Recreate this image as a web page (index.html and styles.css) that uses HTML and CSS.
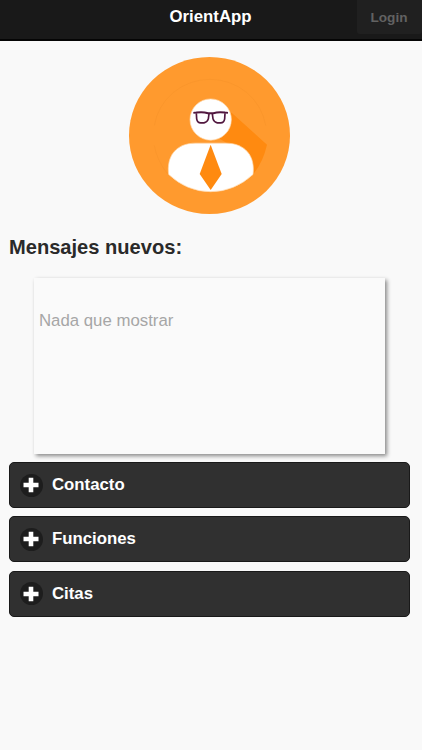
FILE: index.html
```html
<!DOCTYPE html>
<html lang="es">
<head>
  <meta charset="UTF-8">
  <meta name="viewport" content="width=device-width, initial-scale=1.0">
  <title>OrientApp</title>
  <link rel="stylesheet" href="styles.css">
</head>
<body>
  <header class="header">
    <h1>OrientApp</h1>
    <button class="login-btn" disabled>Login</button>
  </header>

  <div class="content">
    <svg class="logo" viewBox="28 36 483 472" preserveAspectRatio="none">
      <ellipse cx="269.5" cy="272" rx="241.5" ry="236" fill="#ff9a2e"/>
      <path d="M104 242 A169 164 0 0 1 438 242 M104 302 Q111 345 143 387" fill="none" stroke="#f8942a" stroke-width="2"/>
      <path d="M335 203 L442 300 Q430 353 401 388 L330 300 L300 282 Z" fill="#ff8a10"/>
      <circle cx="273" cy="224" r="62" fill="#fff" stroke="#ffd9ae" stroke-width="2"/>
      <path d="M147 389 C140 335 168 295 228 295 L318 295 C378 295 407 335 400 389 Q344 441 273 441 Q202 441 147 389 Z" fill="#fff" stroke="#ffd9ae" stroke-width="2"/>
      <path d="M273 300 L306 388 L273 436 L240 388 Z" fill="#ff8a10"/>
      <path d="M221 204 L230 203 Q250 200 265 205 L281 205 Q296 200 316 203 L325 204" fill="none" stroke="#51173f" stroke-width="6"/>
      <path d="M230 205 L231 222 Q233 234 243 234 L253 234 Q263 232 266 222 L268 207 M316 205 L315 222 Q313 234 303 234 L293 234 Q283 232 280 222 L278 207" fill="none" stroke="#51173f" stroke-width="5"/>
    </svg>

    <h2>Mensajes nuevos:</h2>
    <div class="messages">
      <p>Nada que mostrar</p>
    </div>

    <div class="collapsible">
      <span class="icon-plus"><svg viewBox="0 0 16 16"><path d="M8 .8v14.4M.5 8h15" stroke="#fff" stroke-width="4.6"/></svg></span>
      Contacto
    </div>
    <div class="collapsible">
      <span class="icon-plus"><svg viewBox="0 0 16 16"><path d="M8 .8v14.4M.5 8h15" stroke="#fff" stroke-width="4.6"/></svg></span>
      Funciones
    </div>
    <div class="collapsible">
      <span class="icon-plus"><svg viewBox="0 0 16 16"><path d="M8 .8v14.4M.5 8h15" stroke="#fff" stroke-width="4.6"/></svg></span>
      Citas
    </div>
  </div>
</body>
</html>
```
FILE: styles.css
```css
body {
  margin: 0;
  min-height: 100vh;
  background-color: #f9f9f9;
  color: #2a2a2a;
  font-family: "Liberation Sans", Helvetica, Arial, sans-serif;
}
.header {
  display: grid;
  grid-template-columns: 64px 1fr 65px;
  height: 41px;
  box-sizing: border-box;
  background-color: #191919;
  border-bottom: 2px solid #050505;
  color: #fff;
}
.header h1 {
  grid-column: 2;
  margin: 0;
  font-size: 16.8px;
  line-height: 34px;
  text-align: center;
}
.login-btn {
  height: 34px;
  margin: 0;
  padding: 0 1px 0 0;
  background-color: #202020;
  border: none;
  border-radius: 0 0 3px 3px;
  color: #626262;
  font: bold 13.6px "Liberation Sans", Arial, sans-serif;
}
.content {
  padding: 16px 12px 0 9px;
}
.logo {
  display: block;
  width: 161px;
  height: 157px;
  margin: 0 auto;
}
.content h2 {
  margin: 20px 0 18px;
  font-size: 20.1px;
  line-height: 26px;
}
.messages {
  width: 351px;
  height: 176px;
  margin: 0 auto 8px 25px;
  box-sizing: border-box;
  padding: 33px 5px;
  background-color: #fafafa;
  box-shadow: 2px 2px 4px #888;
}
.messages p {
  margin: 0;
  color: #a6a6a6;
  font-size: 16.8px;
  line-height: 20px;
}
.collapsible {
  display: flex;
  align-items: center;
  height: 46px;
  margin-bottom: 8.4px;
  padding: 0 10px 0 9.5px;
  box-sizing: border-box;
  background-color: #303030;
  border: 1px solid #191919;
  border-radius: 5px;
  color: #fff;
  font-size: 16.8px;
  font-weight: bold;
}
.icon-plus {
  display: flex;
  align-items: center;
  justify-content: center;
  width: 23px;
  height: 23px;
  margin-right: 9.5px;
  border-radius: 50%;
  background-color: #1d1d1d;
}
.icon-plus svg {
  width: 16px;
  height: 16px;
}
```
